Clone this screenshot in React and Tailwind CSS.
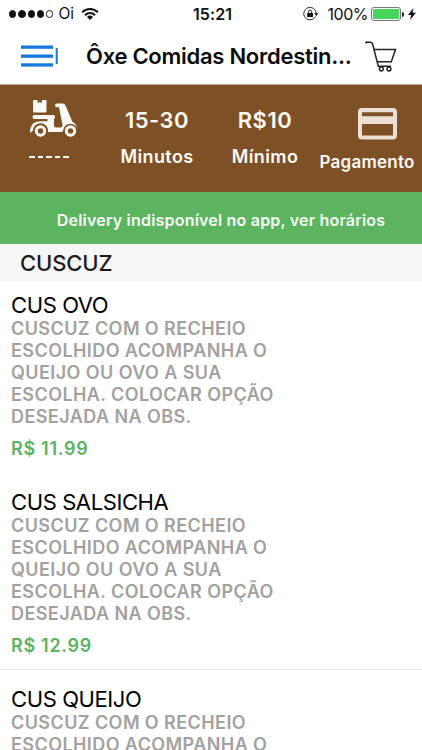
const description = [
  'CUSCUZ COM O RECHEIO',
  'ESCOLHIDO ACOMPANHA O',
  'QUEIJO OU OVO A SUA',
  'ESCOLHA. COLOCAR OPÇÃO',
  'DESEJADA NA OBS.',
];

const items = [
  { name: 'CUS OVO', price: 'R$ 11.99' },
  { name: 'CUS SALSICHA', price: 'R$ 12.99' },
  { name: 'CUS QUEIJO', price: 'R$ 13.99' },
];

const WifiIcon = () => (
  <svg width="18" height="14" viewBox="0 0 18 14" fill="none" stroke="#111" strokeWidth="2">
    <path d="M1.2 5.2a11 11 0 0 1 15.6 0" />
    <path d="M4 8.2a7 7 0 0 1 10 0" />
    <path d="M9 13l-3-3a4.300 4.300 0 0 1 6 0z" fill="#111" stroke="none" />
  </svg>
);

const RotationLockIcon = () => (
  <svg width="16" height="14" viewBox="0 0 16 14" fill="none" stroke="#222" strokeWidth="1">
    <path d="M12.500 9.500A6.200 6.200 0 1 1 13.200 6.500" />
    <path d="M11 6.200h4.600l-2.300 2.700z" fill="#222" stroke="none" />
    <path d="M5.500 6V4.800a1.600 1.600 0 0 1 3.200 0V6" />
    <rect x="4.200" y="5.900" width="5.800" height="4.200" rx="0.500" fill="#111" stroke="none" />
  </svg>
);

const StatusBar = () => (
  <div className="flex h-7 items-center justify-between pl-[9px] pr-[6px] text-[15.5px] text-[#111]">
    <div className="flex w-[150px] items-center">
      <div className="flex gap-[2px]">
        {[1, 2, 3, 4, 5].map((dot) => (
          <span
            key={dot}
            className={`h-[7.3px] w-[7.3px] rounded-full border border-[#111] ${dot < 5 ? 'bg-[#111]' : ''}`}
          />
        ))}
      </div>
      <span className="ml-[5px] mr-[7px] tracking-[-0.1px]">Oi</span>
      <WifiIcon />
    </div>
    <span className="text-[16px] font-semibold tracking-[0.1px]">15:21</span>
    <div className="flex w-[150px] items-center justify-end">
      <RotationLockIcon />
      <span className="ml-[9px] mr-[3px] text-[16px] tracking-[-0.5px]">100%</span>
      <span className="h-[14px] w-[30px] rounded-[3px] border border-[#777] p-px">
        <span className="block h-full w-full rounded-[1px] bg-[#45d65b]" />
      </span>
      <span className="ml-px h-[5px] w-[2px] rounded-r bg-[#222]" />
      <svg className="ml-[4px]" width="8" height="12" viewBox="0 0 8 12" fill="#111">
        <path d="M5.500 0L0 7h3.200L2 12l6-7.200H4.600z" />
      </svg>
    </div>
  </div>
);

const NavBar = () => (
  <header className="flex h-[57px] items-center border-b border-[#c8aa98] pl-[21px] pr-[25px]">
    <svg width="37" height="23" viewBox="0 0 37 23" fill="#1677df">
      <rect x="0" y="0.500" width="32" height="3.300" />
      <rect x="0" y="9.500" width="32" height="3.300" />
      <rect x="0" y="18.300" width="32" height="3.300" />
      <rect x="34.700" y="3" width="2" height="16" />
    </svg>
    <h1 className="ml-[28px] flex-1 whitespace-nowrap text-[22px] font-semibold tracking-[-0.27px] text-[#0c0c0c]">
      Ôxe Comidas Nordestin...
    </h1>
    <svg width="32" height="32" viewBox="0 0 32 32" fill="none" stroke="#222" strokeWidth="1.500">
      <path d="M1 3.500V2.200h4.500q1.500 0 2 1.500L13.300 26.200H26" />
      <path d="M9.300 9.500H30.500L26.300 21.800H12.500" />
      <circle cx="16.300" cy="29" r="1.900" />
      <circle cx="24" cy="29" r="1.900" />
    </svg>
  </header>
);

const ScooterIcon = () => (
  <svg width="49" height="39" viewBox="0 0 49 39" fill="#fffaf5">
    <path d="M5 1h3.500v3l2.200-1 2.200 1V1h3.600q1 0 1 1v10.500q0 1-1 1h-11.500q-1 0-1-1V2q0-1 1-1z" />
    <rect x="3.500" y="16" width="22.500" height="4" rx="1.900" />
    <path d="M18.500 19H25v7.500q0 2 2 2h4q2.500 0 2.500-2.500L30 8.200h-2q-2 0-2-1.900t2-1.900h5.500q2.200 0 3 2L43.500 23q4 1.500 4.500 7l-1.500 1H34.500l-1.300 2H18L6 30l-4.200 3.500H1Q1 22.300 12 22.300h6.500z" />
    <circle cx="11.500" cy="32" r="7.700" fill="#7e5026" />
    <circle cx="41.500" cy="32" r="7.300" fill="#7e5026" />
    <circle cx="11.500" cy="32" r="4.200" fill="none" stroke="#fffaf5" strokeWidth="3" />
    <circle cx="41.500" cy="32" r="4.200" fill="none" stroke="#fffaf5" strokeWidth="3" />
  </svg>
);

const InfoBar = () => (
  <section className="flex h-[107px] bg-[#7e5026] font-semibold text-[#fffaf5]">
    <div className="flex w-[106px] flex-col pl-[29px] pt-[14px]">
      <ScooterIcon />
      <div className="mt-[18px] flex gap-[3px]">
        {[1, 2, 3, 4, 5].map((dash) => (
          <span key={dash} className="h-[2px] w-[5.500px] bg-[#fffaf5]" />
        ))}
      </div>
    </div>
    <div className="flex w-[102px] flex-col items-center pt-[21px]">
      <span className="text-[22px] leading-7 tracking-[0.5px]">15-30</span>
      <span className="mt-[11px] text-[18px] leading-6 tracking-[0.4px]">Minutos</span>
    </div>
    <div className="flex w-[114px] flex-col items-center pt-[21px]">
      <span className="text-[22px] leading-7 tracking-[0.5px]">R$10</span>
      <span className="mt-[11px] text-[18px] leading-6 tracking-[0.4px]">Mínimo</span>
    </div>
    <div className="flex w-[90px] flex-col items-center pt-[23px]">
      <svg className="ml-[20px]" width="39" height="32" viewBox="0 0 39 32">
        <path
          fill="#ecdfd5"
          fillRule="evenodd"
          d="M4 0h31q4 0 4 4v23.500q0 4-4 4H4q-4 0-4-4V4q0-4 4-4zM4 4.200v4h31v-4zM4 16v11.500h31V16z"
        />
      </svg>
      <span className="mt-[10px] whitespace-nowrap text-[17px] leading-6 tracking-[0.25px]">Pagamento</span>
    </div>
  </section>
);

const MenuItem = ({ item, first }) => (
  <article className={`h-[197px] pl-[11px] ${first ? '-mt-[5px]' : 'border-b border-[#e2e2e2]'}`}>
    <h3 className="pt-[15px] text-[22px] leading-[28px] tracking-[-0.4px] text-black">{item.name}</h3>
    <p className="-mt-[1.500px] text-[18px] font-semibold leading-[22px] tracking-[0.42px] text-[#a3a1a0]">
      {description.map((line) => (
        <span key={line} className="block whitespace-nowrap">{line}</span>
      ))}
    </p>
    <p className="mt-[9px] text-[18px] font-semibold leading-6 tracking-[0.7px] text-[#5cb364]">{item.price}</p>
  </article>
);

const App = () => {
  return (
    <div className="flex h-[750px] w-[422px] flex-col overflow-hidden bg-white font-['Inter',sans-serif]">
      <StatusBar />
      <NavBar />
      <InfoBar />
      <div className="flex h-[52px] shrink-0 items-center justify-center bg-[#5cb460] pl-5 pt-[4px] text-[16px] font-semibold tracking-[0.2px] text-[#f6fff4]">
        Delivery indisponível no app, ver horários
      </div>
      <h2 className="h-[37px] shrink-0 bg-[#f6f6f7] pl-[20px] text-[22px] font-medium leading-[39px] tracking-[-0.1px] text-[#1b1b1b]">
        CUSCUZ
      </h2>
      <main className="min-h-0 flex-1">
        {items.map((item, index) => (
          <MenuItem key={item.name} item={item} first={index === 0} />
        ))}
      </main>
    </div>
  );
};

export default App;
